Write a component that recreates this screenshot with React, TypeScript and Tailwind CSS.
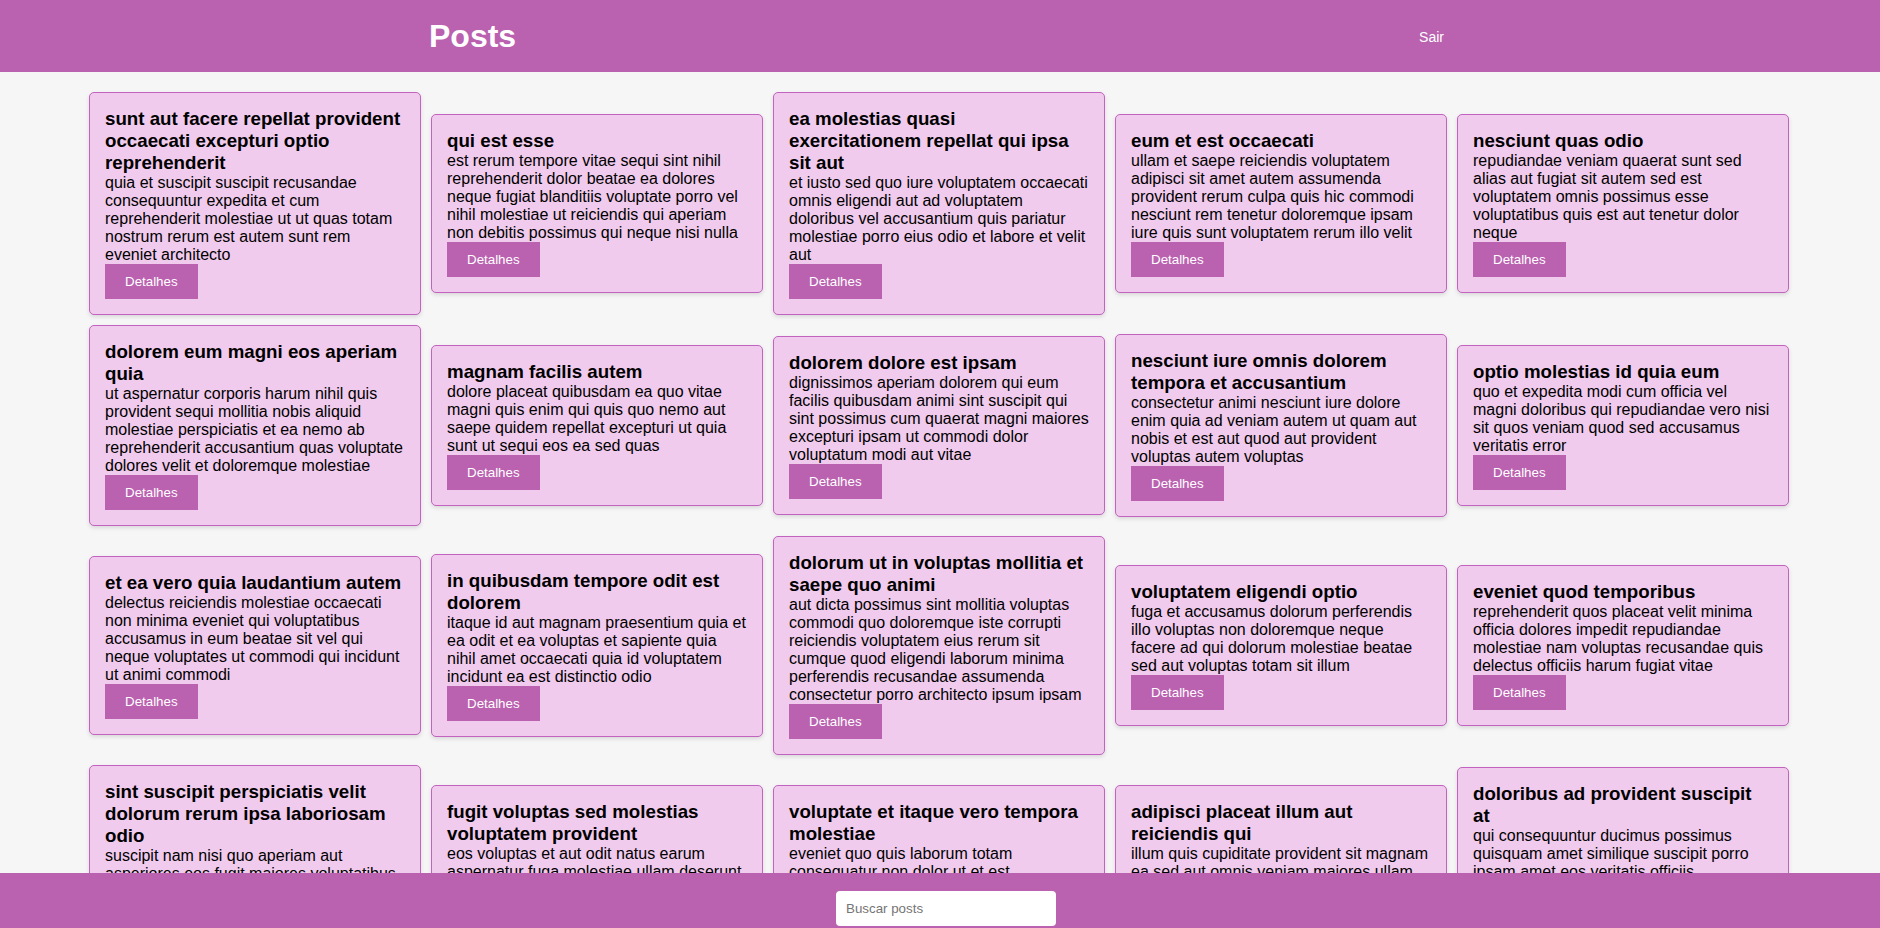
import React, { useState } from 'react';

interface Post {
  id: number;
  title: string;
  body: string;
}

const posts: Post[] = [
  { id: 1, title: 'sunt aut facere repellat provident occaecati excepturi optio reprehenderit', body: 'quia et suscipit suscipit recusandae consequuntur expedita et cum reprehenderit molestiae ut ut quas totam nostrum rerum est autem sunt rem eveniet architecto' },
  { id: 2, title: 'qui est esse', body: 'est rerum tempore vitae sequi sint nihil reprehenderit dolor beatae ea dolores neque fugiat blanditiis voluptate porro vel nihil molestiae ut reiciendis qui aperiam non debitis possimus qui neque nisi nulla' },
  { id: 3, title: 'ea molestias quasi exercitationem repellat qui ipsa sit aut', body: 'et iusto sed quo iure voluptatem occaecati omnis eligendi aut ad voluptatem doloribus vel accusantium quis pariatur molestiae porro eius odio et labore et velit aut' },
  { id: 4, title: 'eum et est occaecati', body: 'ullam et saepe reiciendis voluptatem adipisci sit amet autem assumenda provident rerum culpa quis hic commodi nesciunt rem tenetur doloremque ipsam iure quis sunt voluptatem rerum illo velit' },
  { id: 5, title: 'nesciunt quas odio', body: 'repudiandae veniam quaerat sunt sed alias aut fugiat sit autem sed est voluptatem omnis possimus esse voluptatibus quis est aut tenetur dolor neque' },
  { id: 6, title: 'dolorem eum magni eos aperiam quia', body: 'ut aspernatur corporis harum nihil quis provident sequi mollitia nobis aliquid molestiae perspiciatis et ea nemo ab reprehenderit accusantium quas voluptate dolores velit et doloremque molestiae' },
  { id: 7, title: 'magnam facilis autem', body: 'dolore placeat quibusdam ea quo vitae magni quis enim qui quis quo nemo aut saepe quidem repellat excepturi ut quia sunt ut sequi eos ea sed quas' },
  { id: 8, title: 'dolorem dolore est ipsam', body: 'dignissimos aperiam dolorem qui eum facilis quibusdam animi sint suscipit qui sint possimus cum quaerat magni maiores excepturi ipsam ut commodi dolor voluptatum modi aut vitae' },
  { id: 9, title: 'nesciunt iure omnis dolorem tempora et accusantium', body: 'consectetur animi nesciunt iure dolore enim quia ad veniam autem ut quam aut nobis et est aut quod aut provident voluptas autem voluptas' },
  { id: 10, title: 'optio molestias id quia eum', body: 'quo et expedita modi cum officia vel magni doloribus qui repudiandae vero nisi sit quos veniam quod sed accusamus veritatis error' },
  { id: 11, title: 'et ea vero quia laudantium autem', body: 'delectus reiciendis molestiae occaecati non minima eveniet qui voluptatibus accusamus in eum beatae sit vel qui neque voluptates ut commodi qui incidunt ut animi commodi' },
  { id: 12, title: 'in quibusdam tempore odit est dolorem', body: 'itaque id aut magnam praesentium quia et ea odit et ea voluptas et sapiente quia nihil amet occaecati quia id voluptatem incidunt ea est distinctio odio' },
  { id: 13, title: 'dolorum ut in voluptas mollitia et saepe quo animi', body: 'aut dicta possimus sint mollitia voluptas commodi quo doloremque iste corrupti reiciendis voluptatem eius rerum sit cumque quod eligendi laborum minima perferendis recusandae assumenda consectetur porro architecto ipsum ipsam' },
  { id: 14, title: 'voluptatem eligendi optio', body: 'fuga et accusamus dolorum perferendis illo voluptas non doloremque neque facere ad qui dolorum molestiae beatae sed aut voluptas totam sit illum' },
  { id: 15, title: 'eveniet quod temporibus', body: 'reprehenderit quos placeat velit minima officia dolores impedit repudiandae molestiae nam voluptas recusandae quis delectus officiis harum fugiat vitae' },
  { id: 16, title: 'sint suscipit perspiciatis velit dolorum rerum ipsa laboriosam odio', body: 'suscipit nam nisi quo aperiam aut asperiores eos fugit maiores voluptatibus quia voluptatem quis ullam qui in alias quia est consequatur magni mollitia accusamus ea nisi voluptate dicta' },
  { id: 17, title: 'fugit voluptas sed molestias voluptatem provident', body: 'eos voluptas et aut odit natus earum aspernatur fuga molestiae ullam deserunt ratione qui eos qui nihil ratione nemo velit ut aut id quo' },
  { id: 18, title: 'voluptate et itaque vero tempora molestiae', body: 'eveniet quo quis laborum totam consequatur non dolor ut et est repudiandae est voluptatem vel debitis et magnam' },
  { id: 19, title: 'adipisci placeat illum aut reiciendis qui', body: 'illum quis cupiditate provident sit magnam ea sed aut omnis veniam maiores ullam consequatur atque adipisci quo iste expedita sit quos voluptas' },
  { id: 20, title: 'doloribus ad provident suscipit at', body: 'qui consequuntur ducimus possimus quisquam amet similique suscipit porro ipsam amet eos veritatis officiis exercitationem vel fugit aut necessitatibus totam omnis rerum consequatur expedita quidem cumque explicabo' },
];

const PostCard: React.FC<{ post: Post }> = ({ post }) => (
  <div className="w-[332px] m-[5px] p-[15px] bg-[#f0cbed] border border-[#c163bf] rounded-[5px] shadow-[0_2px_4px_rgba(0,0,0,0.12)]">
    <h3 className="text-[18.72px] font-bold leading-[normal] text-black">{post.title}</h3>
    <p className="text-[16px] leading-[normal] text-black">{post.body}</p>
    <button className="block bg-[#ba61b0] text-white text-[13.33px] leading-[normal] px-[20px] py-[10px]">
      Detalhes
    </button>
  </div>
);

export default function App() {
  const [search, setSearch] = useState('');
  const visible = posts.filter(p => p.title.includes(search) || p.body.includes(search));

  return (
    <div className="min-h-screen bg-[#f6f6f6] font-['Liberation_Sans',Arial,sans-serif]">
      <header className="h-[72px] bg-[#ba61b0] flex items-center">
        <h1 className="ml-[429px] text-[32px] font-bold leading-[normal] text-white">Posts</h1>
        <button className="ml-auto mr-[436px] pt-[2px] text-[14px] leading-[normal] text-white">Sair</button>
      </header>

      <main className="flex flex-wrap justify-center items-center pl-[19px] pr-[21px] pt-[15px] pb-[70px]">
        {visible.map(post => (
          <PostCard key={post.id} post={post} />
        ))}
      </main>

      <footer className="fixed bottom-0 left-0 right-0 h-[55px] bg-[#ba61b0] flex justify-center pt-[18px] pl-[12px]">
        <input
          value={search}
          onChange={e => setSearch(e.target.value)}
          placeholder="Buscar posts"
          className="w-[220px] h-[35px] rounded-[4px] bg-white px-[10px] text-[13.33px] text-black placeholder:text-[#757575] outline-none"
        />
      </footer>
    </div>
  );
}
